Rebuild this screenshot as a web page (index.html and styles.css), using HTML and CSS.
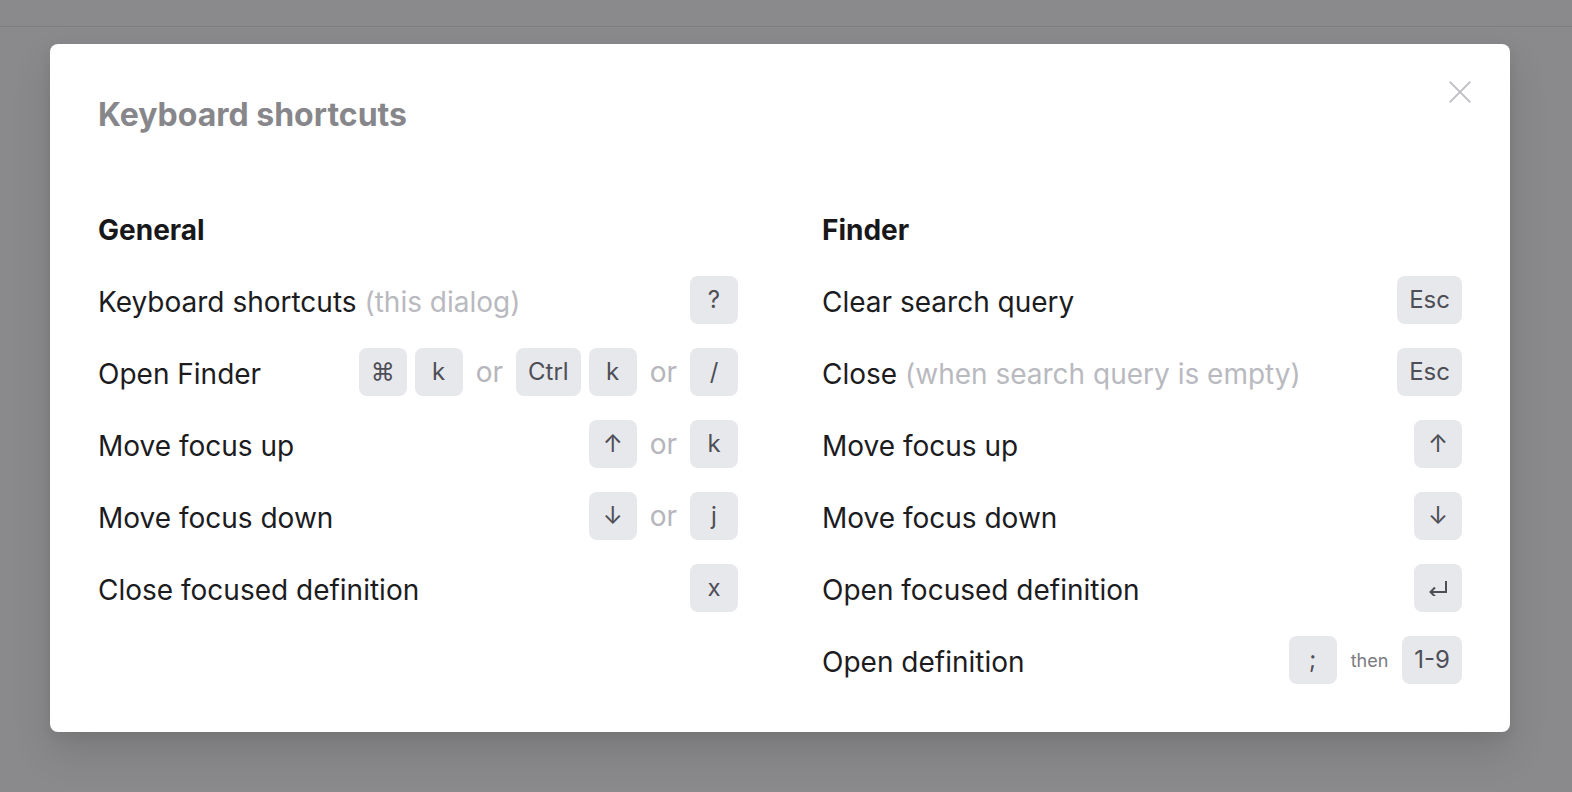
FILE: index.html
```html
<!DOCTYPE html>
<html lang="en">
<head>
<meta charset="utf-8">
<title>Keyboard shortcuts</title>
<link rel="stylesheet" href="styles.css">
</head>
<body>
<div class="topbar"></div>
<div class="modal" role="dialog" aria-label="Keyboard shortcuts">
  <button class="close" aria-label="Close">
    <svg width="24" height="24" viewBox="0 0 24 24"><path d="M1.5 1.5 L22.5 22.5 M22.5 1.5 L1.5 22.5" stroke="currentColor" stroke-width="2.2" fill="none" stroke-linecap="round"/></svg>
  </button>
  <h2 class="title">Keyboard shortcuts</h2>
  <div class="columns">
    <section class="section">
      <h3 class="heading">General</h3>
      <div class="rows">
        <div class="row">
          <span class="label">Keyboard shortcuts <span class="muted">(this dialog)</span></span>
          <span class="keys"><kbd class="key">?</kbd></span>
        </div>
        <div class="row">
          <span class="label">Open Finder</span>
          <span class="keys"><kbd class="key">⌘</kbd><kbd class="key">k</kbd><span class="or">or</span><kbd class="key">Ctrl</kbd><kbd class="key">k</kbd><span class="or">or</span><kbd class="key">/</kbd></span>
        </div>
        <div class="row">
          <span class="label">Move focus up</span>
          <span class="keys"><kbd class="key">↑</kbd><span class="or">or</span><kbd class="key">k</kbd></span>
        </div>
        <div class="row">
          <span class="label">Move focus down</span>
          <span class="keys"><kbd class="key">↓</kbd><span class="or">or</span><kbd class="key">j</kbd></span>
        </div>
        <div class="row">
          <span class="label">Close focused definition</span>
          <span class="keys"><kbd class="key">x</kbd></span>
        </div>
      </div>
    </section>
    <section class="section">
      <h3 class="heading">Finder</h3>
      <div class="rows">
        <div class="row">
          <span class="label">Clear search query</span>
          <span class="keys"><kbd class="key">Esc</kbd></span>
        </div>
        <div class="row">
          <span class="label">Close <span class="muted">(when search query is empty)</span></span>
          <span class="keys"><kbd class="key">Esc</kbd></span>
        </div>
        <div class="row">
          <span class="label">Move focus up</span>
          <span class="keys"><kbd class="key">↑</kbd></span>
        </div>
        <div class="row">
          <span class="label">Move focus down</span>
          <span class="keys"><kbd class="key">↓</kbd></span>
        </div>
        <div class="row">
          <span class="label">Open focused definition</span>
          <span class="keys"><kbd class="key"><svg class="enter" width="20" height="16" viewBox="0 0 20 16"><path d="M18 1 V12 H2.5 M7 7.5 L2.5 12 L7 16.5" stroke="currentColor" stroke-width="2" fill="none"/></svg></kbd></span>
        </div>
        <div class="row">
          <span class="label">Open definition</span>
          <span class="keys"><kbd class="key">;</kbd><span class="then">then</span><kbd class="key">1-9</kbd></span>
        </div>
      </div>
    </section>
  </div>
</div>
</body>
</html>
```
FILE: styles.css
```css
* { box-sizing: border-box; }
html, body { margin: 0; padding: 0; }
body {
  background: #8a8a8c;
  font-family: Inter, "Noto Sans", "Liberation Sans", sans-serif;
  height: 792px;
  overflow: hidden;
}
.topbar {
  height: 27px;
  border-bottom: 1px solid #7e7e81;
}
.modal {
  position: relative;
  margin: 17px 0 0 50px;
  width: 1460px;
  background: #ffffff;
  border-radius: 8px;
  padding: 48px;
  box-shadow: 0 20px 40px rgba(0, 0, 0, 0.12), 0 4px 12px rgba(0, 0, 0, 0.06);
}
.close {
  position: absolute;
  top: 32px;
  right: 34px;
  width: 32px;
  height: 32px;
  padding: 0;
  border: 0;
  background: transparent;
  color: #bfbfc5;
  display: flex;
  align-items: center;
  justify-content: center;
}
.close svg { width: 22px; height: 22px; }
.title {
  margin: 0 0 70px;
  font-size: 32px;
  line-height: 46px;
  font-weight: 700;
  color: #86868b;
}
.columns {
  display: grid;
  grid-template-columns: 1fr 1fr;
  column-gap: 84px;
}
.section {
  display: flex;
  flex-direction: column;
}
.heading {
  margin: 0 0 24px;
  font-size: 28px;
  line-height: 44px;
  font-weight: 700;
  color: #18181b;
}
.rows {
  display: flex;
  flex-direction: column;
  gap: 24px;
}
.row {
  display: flex;
  align-items: center;
  justify-content: space-between;
  height: 48px;
}
.label {
  font-size: 28px;
  line-height: 48px;
  padding-top: 4px;
  color: #1c1c1f;
}
.muted { color: #b9b9c0; }
.keys {
  display: flex;
  align-items: center;
  gap: 8px;
}
.key {
  display: inline-flex;
  align-items: center;
  justify-content: center;
  min-width: 48px;
  height: 48px;
  padding: 0 12px;
  border-radius: 8px;
  background: #e6e8ec;
  color: #4e4e56;
  font-family: Inter, "Noto Sans", "DejaVu Sans", sans-serif;
  font-size: 24px;
  line-height: 1;
}
.enter { width: 20px; height: 16px; }
.or {
  margin: 0 5px;
  font-size: 28px;
  color: #b6b6bc;
}
.then {
  margin: 0 6px;
  font-size: 18px;
  color: #7b7b81;
}
```
